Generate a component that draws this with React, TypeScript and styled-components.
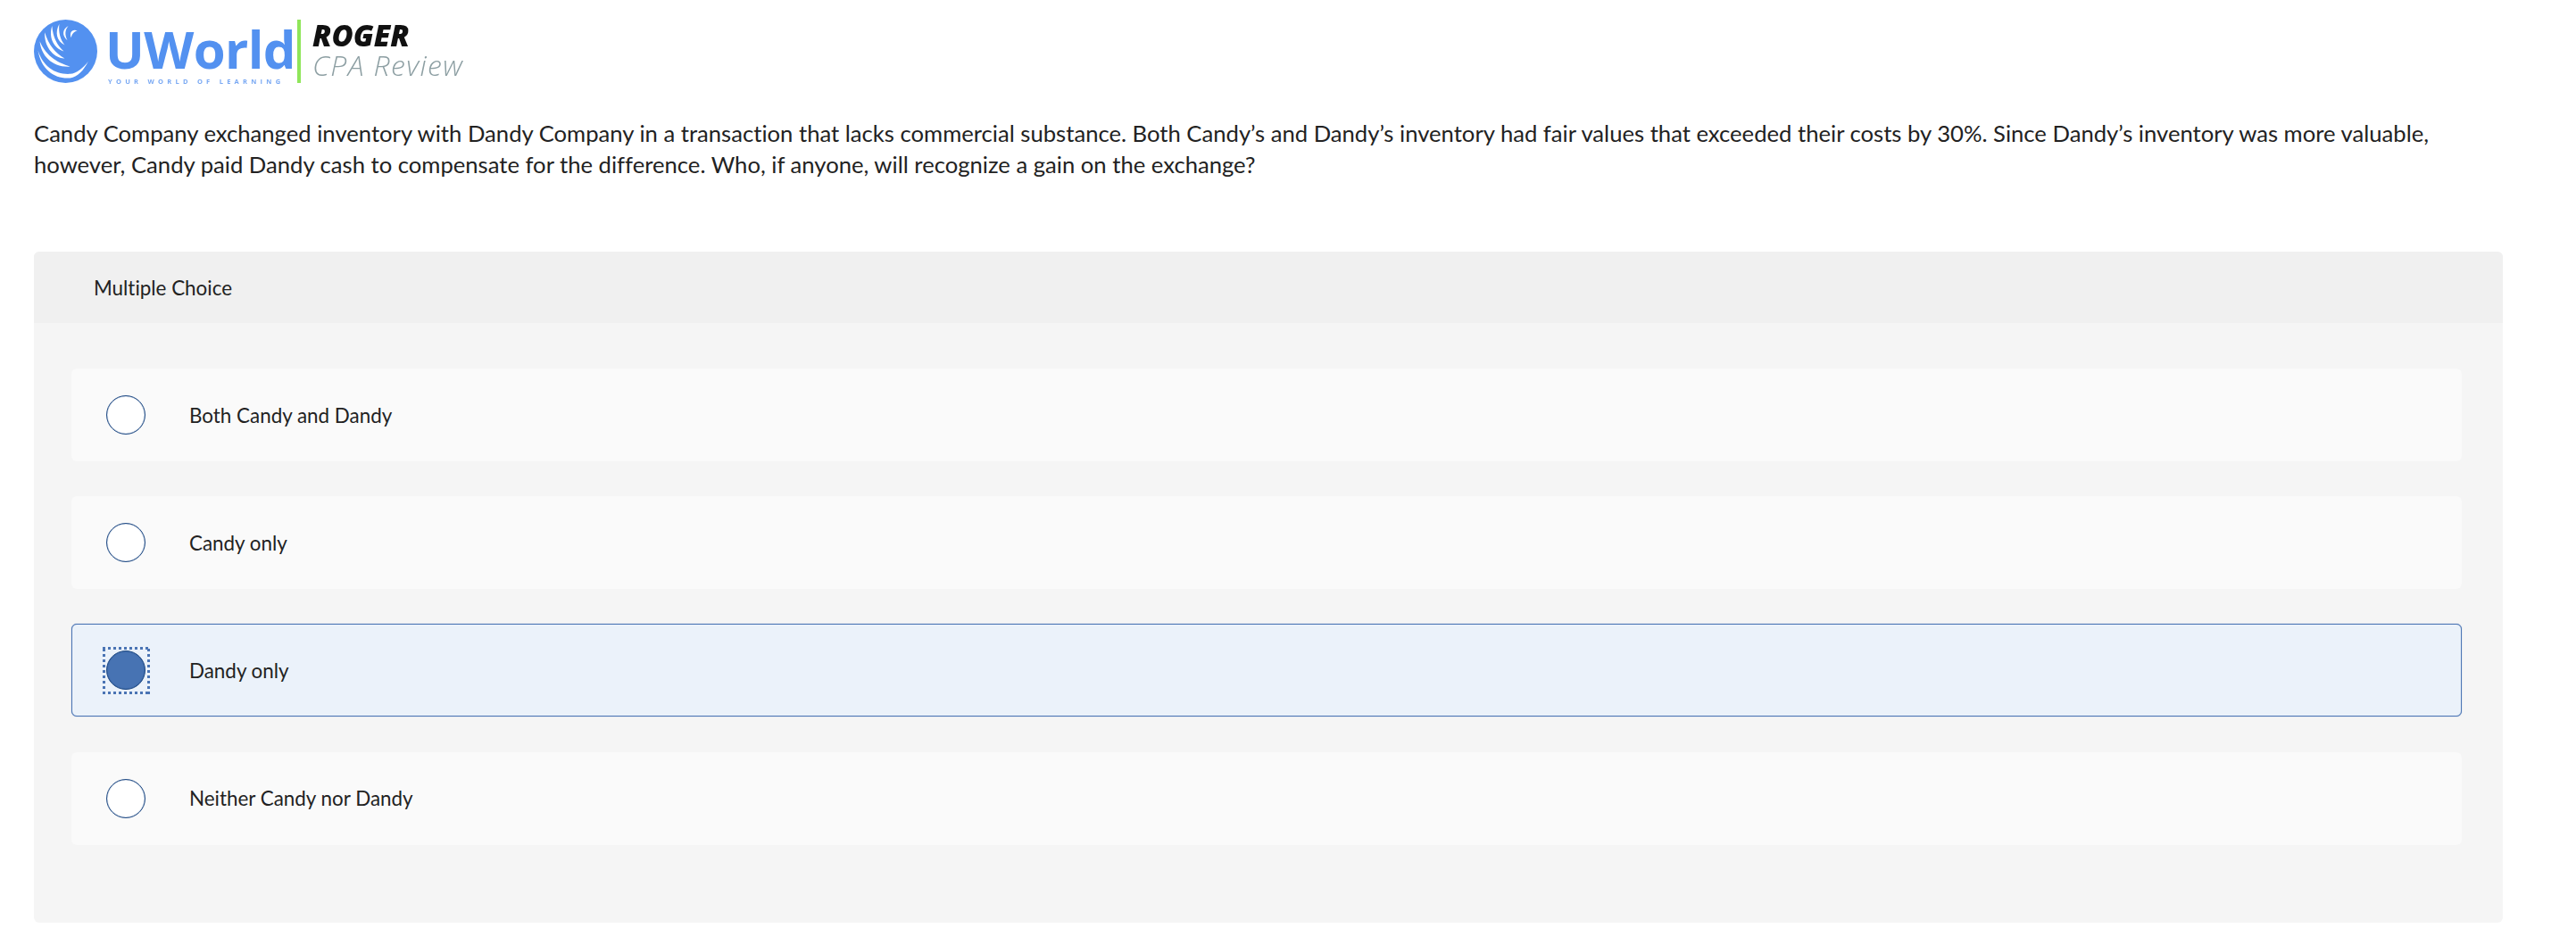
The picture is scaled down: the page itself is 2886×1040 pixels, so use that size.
import React from 'react';
import styled, { createGlobalStyle } from 'styled-components';

const GlobalStyle = createGlobalStyle`
  html, body {
    margin: 0;
    padding: 0;
    background: #fff;
    font-family: 'Lato', 'Open Sans', sans-serif;
    font-variant-ligatures: none;
    color: #222;
  }
`;

const Page = styled.div`
  width: 2886px;
  height: 1040px;
  box-sizing: border-box;
  padding: 22px 82px 0 38px;
  overflow: hidden;
`;

const LogoRow = styled.div`
  display: flex;
  align-items: stretch;
  height: 71px;
  filter: blur(0.5px);
`;

const Swirl = styled.svg`
  width: 71px;
  height: 71px;
  flex: none;
`;

const BrandBlock = styled.div`
  display: flex;
  flex-direction: column;
  width: 204px;
  margin-left: 9px;
  color: #5391f0;
`;

const BrandName = styled.div`
  font-family: 'Open Sans', sans-serif;
  font-size: 58px;
  font-weight: 700;
  line-height: 66px;
  height: 65px;
  letter-spacing: -0.6px;
`;

const BrandTag = styled.div`
  font-family: 'Open Sans', sans-serif;
  font-size: 7.5px;
  font-weight: 700;
  line-height: 8px;
  letter-spacing: 4.25px;
  margin-left: 3px;
  white-space: nowrap;
  color: #7aa9f3;
`;

const Divider = styled.div`
  width: 4px;
  margin: 0 13px 0 11px;
  background: #8fe65a;
`;

const ReviewBlock = styled.div`
  display: flex;
  flex-direction: column;
  padding-top: 1px;
`;

const ReviewTop = styled.div`
  font-family: 'Open Sans', sans-serif;
  font-size: 33px;
  font-weight: 800;
  font-style: italic;
  line-height: 33px;
  color: #111;
`;

const ReviewBottom = styled.div`
  font-family: 'Open Sans', sans-serif;
  font-size: 32px;
  font-weight: 300;
  font-style: italic;
  line-height: 33px;
  letter-spacing: 1.4px;
  color: #8d9fa3;
`;

const Question = styled.p`
  margin: 39px 0 0;
  font-size: 25.65px;
  line-height: 34.5px;
  color: #222;
`;

const Panel = styled.section`
  margin-top: 81px;
  height: 752px;
  background: #f5f5f5;
  border-radius: 6px;
  overflow: hidden;
`;

const PanelHeader = styled.div`
  display: flex;
  align-items: center;
  height: 80px;
  padding-left: 67px;
  background: #f0f0f0;
  font-size: 22.4px;
`;

const Choices = styled.div`
  display: flex;
  flex-direction: column;
  gap: 39.2px;
  padding: 51px 46px 0 42px;
`;

const Choice = styled.div<{ $selected: boolean }>`
  display: flex;
  align-items: center;
  height: 104px;
  box-sizing: border-box;
  padding-left: ${(p) => (p.$selected ? '38px' : '39px')};
  border-radius: 6px;
  background: ${(p) => (p.$selected ? '#ebf2fa' : '#fafafa')};
  border: ${(p) => (p.$selected ? '1px solid #4a74b4' : 'none')};
  box-shadow: ${(p) => (p.$selected ? '0 0 1px #4a74b4' : 'none')};
  font-size: 22.4px;
`;

const Radio = styled.span<{ $selected: boolean }>`
  position: relative;
  flex: none;
  width: 44px;
  height: 44px;
  box-sizing: border-box;
  margin-right: 49px;
  border-radius: 50%;
  border: 1px solid #1f4a85;
  box-shadow: inset 0 0 1px #1f4a85;
  background: ${(p) => (p.$selected ? '#4773b3' : '#fff')};
`;

const FocusRing = styled.span`
  position: absolute;
  inset: -5.5px;
  background:
    repeating-linear-gradient(90deg, #4a74b4 0 3px, transparent 3px 6px) top / 100% 3px no-repeat,
    repeating-linear-gradient(90deg, #4a74b4 0 3px, transparent 3px 6px) bottom / 100% 3px no-repeat,
    repeating-linear-gradient(0deg, #4a74b4 0 3px, transparent 3px 6px) left / 3px 100% no-repeat,
    repeating-linear-gradient(0deg, #4a74b4 0 3px, transparent 3px 6px) right / 3px 100% no-repeat;
`;

const choices = ['Both Candy and Dandy', 'Candy only', 'Dandy only', 'Neither Candy nor Dandy'];
const selectedChoice = 'Dandy only';

export default function App() {
  return (
    <Page>
      <GlobalStyle />
      <LogoRow>
        <Swirl viewBox="0 0 70 70">
          <circle cx="35" cy="35" r="35" fill="#5391f0" />
          <g fill="#fff">
            <path d="M4.5 34C8 56 24 66 40 64.5C48 63.5 55 56 60 46C54 54 47 59 40 60C24 61 10 52 4.5 34Z" />
            <path d="M6.5 24C8 40 20 53 40 52C28 48 14 42 6.5 24Z" />
            <path d="M12 14C11 28 20 42 34 43C24 37 16 28 12 14Z" />
            <path d="M20 7C16 20 22 32 33 35C26 29 21 20 20 7Z" />
            <path d="M28 5C23 14 25 24 34 28C29 22 27 14 28 5Z" />
            <path d="M38 7C31 11 31 18 37 23C34 17 34 12 38 7Z" />
            <path d="M48 12C42 10 39 14 41 20C42 16 44 13 48 12Z" />
          </g>
        </Swirl>
        <BrandBlock>
          <BrandName>UWorld</BrandName>
          <BrandTag>YOUR WORLD OF LEARNING</BrandTag>
        </BrandBlock>
        <Divider />
        <ReviewBlock>
          <ReviewTop>ROGER</ReviewTop>
          <ReviewBottom>CPA Review</ReviewBottom>
        </ReviewBlock>
      </LogoRow>
      <Question>
        Candy Company exchanged inventory with Dandy Company in a transaction that lacks commercial substance. Both Candy’s and Dandy’s inventory had fair values that exceeded their costs by 30%. Since Dandy’s inventory was more valuable, however, Candy paid Dandy cash to compensate for the difference. Who, if anyone, will recognize a gain on the exchange?
      </Question>
      <Panel>
        <PanelHeader>Multiple Choice</PanelHeader>
        <Choices>
          {choices.map((label) => {
            const selected = label === selectedChoice;
            return (
              <Choice key={label} $selected={selected}>
                <Radio $selected={selected}>{selected && <FocusRing />}</Radio>
                {label}
              </Choice>
            );
          })}
        </Choices>
      </Panel>
    </Page>
  );
}
